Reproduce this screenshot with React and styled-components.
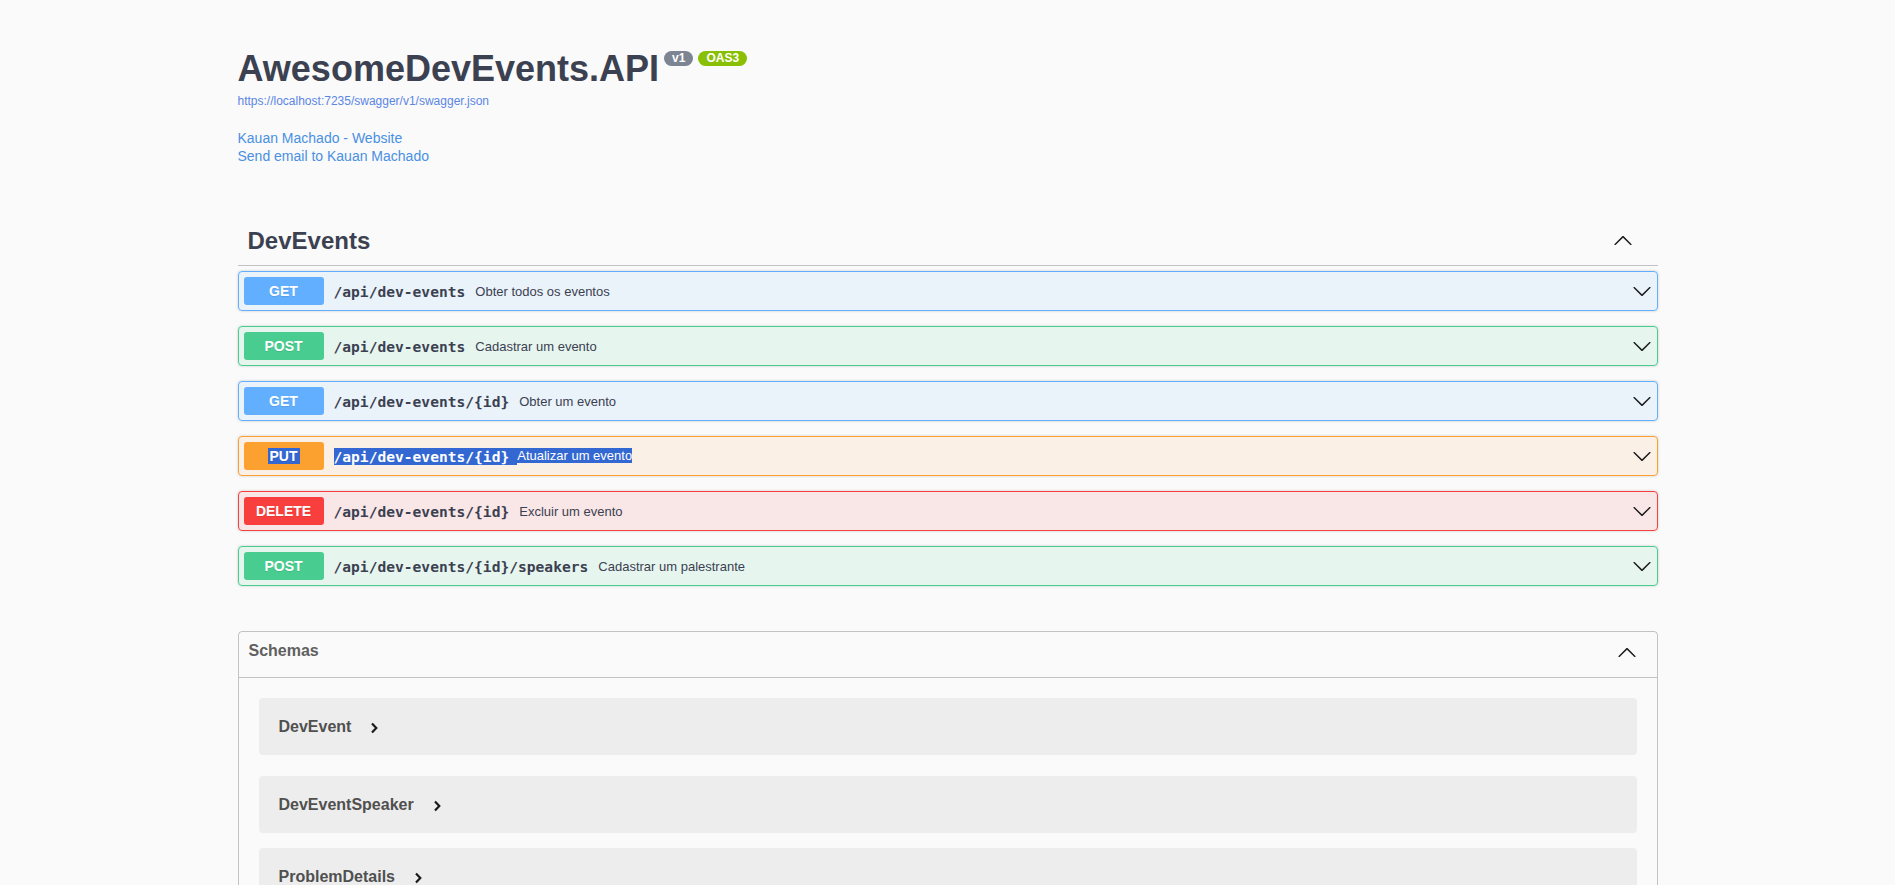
import React from 'react';
import styled, { createGlobalStyle } from 'styled-components';

const Global = createGlobalStyle`
  html { scrollbar-width: none; }
  html::-webkit-scrollbar { display: none; }
  * { box-sizing: border-box; }
  body {
    margin: 0;
    background: #fafafa;
    font-family: "Liberation Sans", Arial, sans-serif;
    color: #3b4151;
  }
`;

const Wrapper = styled.div`
  max-width: 1460px;
  margin: 0 auto;
  padding: 0 20px;
`;

const Info = styled.section`
  padding-top: 50px;
  margin-bottom: 51px;
`;

const Title = styled.h2`
  display: flex;
  align-items: flex-start;
  margin: 0;
  font-size: 36px;
  line-height: 37px;
  font-weight: 700;
  color: #3b4151;
`;

const Badge = styled.small`
  display: inline-block;
  margin: 1px 0 0 5px;
  padding: 0 8px;
  height: 15px;
  line-height: 15px;
  font-size: 12px;
  font-weight: 700;
  color: #fff;
  border-radius: 57px;
  background: ${(p) => p.$bg};
`;

const UrlLink = styled.a`
  display: block;
  margin-top: 7px;
  font-size: 12px;
  line-height: 14px;
  color: #5a86e4;
  text-decoration: none;
  width: max-content;
`;

const Contact = styled.div`
  margin-top: 21px;
`;

const ContactLink = styled.a`
  display: block;
  width: max-content;
  font-size: 14px;
  line-height: 18px;
  color: #4990e2;
  text-decoration: none;
`;

const TagHeader = styled.h3`
  display: flex;
  align-items: center;
  height: 50px;
  margin: 0 0 5px;
  padding: 0 20px 0 10px;
  border-bottom: 1px solid rgba(59, 65, 81, 0.3);
  font-size: 24px;
  font-weight: 700;
  color: #3b4151;
`;

const Grow = styled.span`
  flex: 1 1 auto;
`;

const ArrowSvg = styled.svg`
  flex: none;
  width: 20px;
  height: 20px;
  margin-right: ${(p) => p.$mr || 0}px;
  margin-top: ${(p) => p.$mt || 0}px;
  transform: ${(p) => (p.$up ? 'rotate(180deg)' : 'none')};
`;

const Arrow = ({ up, mr, mt }) => (
  <ArrowSvg viewBox="0 0 20 20" $up={up} $mr={mr} $mt={mt}>
    <path
      fill="#1b1b1b"
      d="M17.418 6.109c.272-.268.709-.268.979 0s.271.701 0 .969l-7.908 7.83c-.27.268-.707.268-.979 0l-7.908-7.83c-.27-.268-.27-.701 0-.969.271-.268.709-.268.979 0L10 13.25l7.418-7.141z"
    />
  </ArrowSvg>
);

const METHODS = {
  GET: { c: '#61affe', bg: 'rgba(97,175,254,.1)' },
  POST: { c: '#49cc90', bg: 'rgba(73,204,144,.1)' },
  PUT: { c: '#fca130', bg: 'rgba(252,161,48,.1)' },
  DELETE: { c: '#f93e3e', bg: 'rgba(249,62,62,.1)' },
};

const OpList = styled.div`
  display: flex;
  flex-direction: column;
  gap: 15px;
`;

const OpBlock = styled.div`
  border: 1px solid ${(p) => p.$c};
  border-radius: 4px;
  background: ${(p) => p.$bg};
  box-shadow: 0 0 3px rgba(0, 0, 0, 0.19);
`;

const Summary = styled.div`
  display: flex;
  align-items: center;
  height: 38px;
  padding: 5px;
`;

const Method = styled.span`
  flex: none;
  display: flex;
  align-items: center;
  justify-content: center;
  min-width: 80px;
  height: 28px;
  border-radius: 3px;
  background: ${(p) => p.$c};
  color: #fff;
  font-size: 14px;
  font-weight: 700;
  text-shadow: 0 1px 0 rgba(0, 0, 0, 0.1);
`;

const Path = styled.span`
  margin: 0 ${(p) => (p.$sel ? 0 : 10)}px 0 10px;
  font-family: "DejaVu Sans Mono", "Liberation Mono", monospace;
  font-size: 14.6px;
  font-weight: 700;
  color: #3b4151;
  white-space: nowrap;
`;

const Desc = styled.span`
  flex: 1 1 auto;
  font-size: 13px;
  color: #3b4151;
`;

const Sel = styled.span`
  background: #3367d1;
  color: #fff;
  line-height: 16px;
  padding: 0 ${(p) => p.$pr || 0}px 0 ${(p) => p.$pl || 0}px;
`;

const Models = styled.section`
  margin: 45px 0 30px;
  padding-bottom: 20px;
  border: 1px solid rgba(59, 65, 81, 0.3);
  border-radius: 4px;
`;

const ModelsHead = styled.h4`
  display: flex;
  align-items: flex-start;
  height: 46px;
  margin: 0;
  padding: 10px 20px 10px 10px;
  border-bottom: 1px solid rgba(59, 65, 81, 0.3);
  font-size: 16px;
  line-height: 18px;
  font-weight: 700;
  color: #606060;
`;

const ModelContainer = styled.div`
  display: flex;
  align-items: center;
  height: 57px;
  margin: ${(p) => (p.$first ? '20px 20px 21px' : '0 20px 15px')};
  padding: 0 20px;
  border-radius: 4px;
  background: rgba(0, 0, 0, 0.05);
`;

const ModelTitle = styled.span`
  font-size: 16px;
  font-weight: 700;
  color: #505050;
`;

const ToggleSvg = styled.svg`
  width: 8px;
  height: 12px;
  margin: 3px 0 0 19px;
`;

const ModelToggle = () => (
  <ToggleSvg viewBox="0 0 8 12">
    <polyline points="2,1.5 6.3,6 2,10.5" fill="none" stroke="#1a1a1a" strokeWidth="2.2" />
  </ToggleSvg>
);

const ops = [
  { m: 'GET', path: '/api/dev-events', desc: 'Obter todos os eventos' },
  { m: 'POST', path: '/api/dev-events', desc: 'Cadastrar um evento' },
  { m: 'GET', path: '/api/dev-events/{id}', desc: 'Obter um evento' },
  { m: 'PUT', path: '/api/dev-events/{id}', desc: 'Atualizar um evento', sel: true },
  { m: 'DELETE', path: '/api/dev-events/{id}', desc: 'Excluir um evento' },
  { m: 'POST', path: '/api/dev-events/{id}/speakers', desc: 'Cadastrar um palestrante' },
];

const schemas = ['DevEvent', 'DevEventSpeaker', 'ProblemDetails'];

export default function App() {
  return (
    <>
      <Global />
      <Wrapper>
        <Info>
          <Title>
            AwesomeDevEvents.API
            <Badge $bg="#7d8492">v1</Badge>
            <Badge $bg="#89bf04">OAS3</Badge>
          </Title>
          <UrlLink href="#">https://localhost:7235/swagger/v1/swagger.json</UrlLink>
          <Contact>
            <ContactLink href="#">Kauan Machado - Website</ContactLink>
            <ContactLink href="#">Send email to Kauan Machado</ContactLink>
          </Contact>
        </Info>

        <TagHeader>
          <span>DevEvents</span>
          <Grow />
          <Arrow up mr={5} />
        </TagHeader>

        <OpList>
          {ops.map((o, i) => {
            const c = METHODS[o.m];
            return (
              <OpBlock key={i} $c={c.c} $bg={c.bg}>
                <Summary>
                  <Method $c={c.c}>{o.sel ? <Sel $pl={2} $pr={2}>{o.m}</Sel> : o.m}</Method>
                  <Path $sel={o.sel}>{o.sel ? <Sel $pr={8}>{o.path}</Sel> : o.path}</Path>
                  <Desc>{o.sel ? <Sel>{o.desc}</Sel> : o.desc}</Desc>
                  <Arrow />
                </Summary>
              </OpBlock>
            );
          })}
        </OpList>

        <Models>
          <ModelsHead>
            <span>Schemas</span>
            <Grow />
            <Arrow up mt={1} />
          </ModelsHead>
          {schemas.map((s, i) => (
            <ModelContainer key={s} $first={i === 0}>
              <ModelTitle>{s}</ModelTitle>
              <ModelToggle />
            </ModelContainer>
          ))}
        </Models>
      </Wrapper>
    </>
  );
}
